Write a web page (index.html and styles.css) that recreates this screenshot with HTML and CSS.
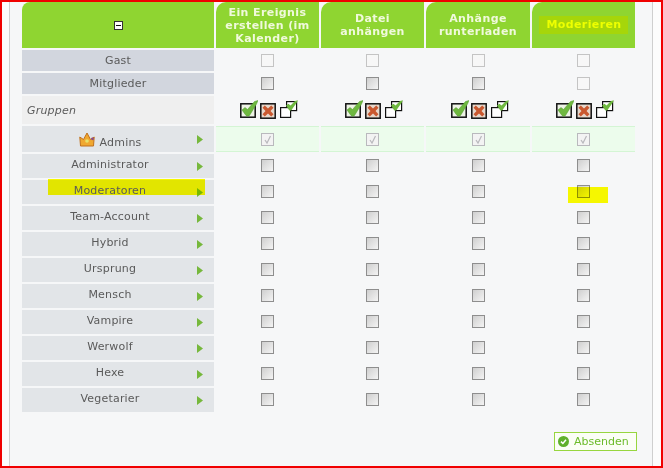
FILE: index.html
```html
<!DOCTYPE html>
<html lang="de">
<head>
<meta charset="utf-8">
<title>Berechtigungen</title>
<link rel="stylesheet" href="styles.css">
</head>
<body>
<svg class="defs" width="0" height="0" aria-hidden="true">
  <symbol id="i-check" viewBox="0 0 18 18">
    <rect x="0.8" y="3.8" width="14.4" height="13.4" fill="#eef3e6" stroke="#111" stroke-width="1.5"/>
    <path d="M2 10 L5 7.5 L7.5 9.5 L14.5 1.5 L18 .5 L16.5 4 L9.5 15.5 Q7.5 17 6 15.5 Z" fill="#6fb840" stroke="#4f9a2c" stroke-width=".5"/>
  </symbol>
  <symbol id="i-cross" viewBox="0 0 16 16">
    <rect x="0.8" y="0.8" width="14.4" height="14.4" fill="#e6d8cc" stroke="#111" stroke-width="1.5"/>
    <path d="M2.5 4.8 L4.8 2.5 L8 5.5 L11.2 2.5 L13.5 4.8 L10.5 8 L13.5 11.2 L11.2 13.5 L8 10.5 L4.8 13.5 L2.5 11.2 L5.5 8 Z" fill="#c9582f"/>
  </symbol>
  <symbol id="i-copy" viewBox="0 0 18 18">
    <rect x="6.6" y="1.6" width="10" height="9" fill="#fff" stroke="#111" stroke-width="1.2"/>
    <rect x="0.6" y="7.6" width="10" height="9.8" fill="#fff" stroke="#111" stroke-width="1.2"/>
    <path d="M6 5.5 L8.5 3.8 L10.5 5.5 L15 1 L18 .3 L16.5 3 L11.5 10 Q10 11 9 10 Z" fill="#6fb840"/>
  </symbol>
  <symbol id="i-arrow" viewBox="0 0 6 9">
    <path d="M0 0 L6 4.5 L0 9 Z" fill="#76b83c"/>
  </symbol>
</svg>
<main class="frame">
  <div class="page">
    <div class="grid">
      <div class="head head-toggle"><span class="toggle"></span></div>
      <div class="head">Ein Ereignis erstellen (im Kalender)</div>
      <div class="head">Datei anhängen</div>
      <div class="head">Anhänge runterladen</div>
      <div class="head"><span class="mark-head">Moderieren</span></div>

      <div class="label label-base">Gast</div>
      <div class="cell"><span class="box"></span></div>
      <div class="cell"><span class="box"></span></div>
      <div class="cell"><span class="box"></span></div>
      <div class="cell"><span class="box"></span></div>

      <div class="label label-base">Mitglieder</div>
      <div class="cell"><span class="box box-on"></span></div>
      <div class="cell"><span class="box box-on"></span></div>
      <div class="cell"><span class="box box-on"></span></div>
      <div class="cell"><span class="box"></span></div>

      <div class="label label-section">Gruppen</div>
      <div class="cell cell-tools"><svg class="ti"><use href="#i-check"/></svg><svg class="ti ti-x"><use href="#i-cross"/></svg><svg class="ti"><use href="#i-copy"/></svg></div>
      <div class="cell cell-tools"><svg class="ti"><use href="#i-check"/></svg><svg class="ti ti-x"><use href="#i-cross"/></svg><svg class="ti"><use href="#i-copy"/></svg></div>
      <div class="cell cell-tools"><svg class="ti"><use href="#i-check"/></svg><svg class="ti ti-x"><use href="#i-cross"/></svg><svg class="ti"><use href="#i-copy"/></svg></div>
      <div class="cell cell-tools"><svg class="ti"><use href="#i-check"/></svg><svg class="ti ti-x"><use href="#i-cross"/></svg><svg class="ti"><use href="#i-copy"/></svg></div>

      <div class="label label-group">
        <span class="name name-admin"><svg class="crown" viewBox="0 0 16 15"><path d="M.8 5 L4.5 7.5 L8 1 L11.5 7.5 L15.2 5 L14.5 14 L1.5 14 Z" fill="#f0a830" stroke="#c0701c" stroke-width="1"/><circle cx="8" cy="9" r="1.8" fill="#e7e26a"/><circle cx="13.5" cy="6.8" r="1.4" fill="#8a4a8a"/></svg>Admins</span>
        <svg class="arrow"><use href="#i-arrow"/></svg>
      </div>
      <div class="cell cell-green"><span class="box box-check"><svg viewBox="0 0 11 11"><path d="M3 6 L5 9 L8.5 2" fill="none" stroke="#b8b8bc" stroke-width="1.2"/></svg></span></div>
      <div class="cell cell-green"><span class="box box-check"><svg viewBox="0 0 11 11"><path d="M3 6 L5 9 L8.5 2" fill="none" stroke="#b8b8bc" stroke-width="1.2"/></svg></span></div>
      <div class="cell cell-green"><span class="box box-check"><svg viewBox="0 0 11 11"><path d="M3 6 L5 9 L8.5 2" fill="none" stroke="#b8b8bc" stroke-width="1.2"/></svg></span></div>
      <div class="cell cell-green"><span class="box box-check"><svg viewBox="0 0 11 11"><path d="M3 6 L5 9 L8.5 2" fill="none" stroke="#b8b8bc" stroke-width="1.2"/></svg></span></div>

      <div class="label label-group"><span class="name">Administrator</span><svg class="arrow"><use href="#i-arrow"/></svg></div>
      <div class="cell"><span class="box box-on"></span></div>
      <div class="cell"><span class="box box-on"></span></div>
      <div class="cell"><span class="box box-on"></span></div>
      <div class="cell"><span class="box box-on"></span></div>

      <div class="label label-group"><span class="mark mark-row"></span><span class="name">Moderatoren</span><svg class="arrow"><use href="#i-arrow"/></svg></div>
      <div class="cell"><span class="box box-on"></span></div>
      <div class="cell"><span class="box box-on"></span></div>
      <div class="cell"><span class="box box-on"></span></div>
      <div class="cell"><span class="box box-on"></span><span class="mark mark-box"></span></div>

      <div class="label label-group"><span class="name">Team-Account</span><svg class="arrow"><use href="#i-arrow"/></svg></div>
      <div class="cell"><span class="box box-on"></span></div>
      <div class="cell"><span class="box box-on"></span></div>
      <div class="cell"><span class="box box-on"></span></div>
      <div class="cell"><span class="box box-on"></span></div>

      <div class="label label-group"><span class="name">Hybrid</span><svg class="arrow"><use href="#i-arrow"/></svg></div>
      <div class="cell"><span class="box box-on"></span></div>
      <div class="cell"><span class="box box-on"></span></div>
      <div class="cell"><span class="box box-on"></span></div>
      <div class="cell"><span class="box box-on"></span></div>

      <div class="label label-group"><span class="name">Ursprung</span><svg class="arrow"><use href="#i-arrow"/></svg></div>
      <div class="cell"><span class="box box-on"></span></div>
      <div class="cell"><span class="box box-on"></span></div>
      <div class="cell"><span class="box box-on"></span></div>
      <div class="cell"><span class="box box-on"></span></div>

      <div class="label label-group"><span class="name">Mensch</span><svg class="arrow"><use href="#i-arrow"/></svg></div>
      <div class="cell"><span class="box box-on"></span></div>
      <div class="cell"><span class="box box-on"></span></div>
      <div class="cell"><span class="box box-on"></span></div>
      <div class="cell"><span class="box box-on"></span></div>

      <div class="label label-group"><span class="name">Vampire</span><svg class="arrow"><use href="#i-arrow"/></svg></div>
      <div class="cell"><span class="box box-on"></span></div>
      <div class="cell"><span class="box box-on"></span></div>
      <div class="cell"><span class="box box-on"></span></div>
      <div class="cell"><span class="box box-on"></span></div>

      <div class="label label-group"><span class="name">Werwolf</span><svg class="arrow"><use href="#i-arrow"/></svg></div>
      <div class="cell"><span class="box box-on"></span></div>
      <div class="cell"><span class="box box-on"></span></div>
      <div class="cell"><span class="box box-on"></span></div>
      <div class="cell"><span class="box box-on"></span></div>

      <div class="label label-group"><span class="name">Hexe</span><svg class="arrow"><use href="#i-arrow"/></svg></div>
      <div class="cell"><span class="box box-on"></span></div>
      <div class="cell"><span class="box box-on"></span></div>
      <div class="cell"><span class="box box-on"></span></div>
      <div class="cell"><span class="box box-on"></span></div>

      <div class="label label-group"><span class="name">Vegetarier</span><svg class="arrow"><use href="#i-arrow"/></svg></div>
      <div class="cell"><span class="box box-on"></span></div>
      <div class="cell"><span class="box box-on"></span></div>
      <div class="cell"><span class="box box-on"></span></div>
      <div class="cell"><span class="box box-on"></span></div>
    </div>
    <div class="actions">
      <button class="submit" type="button"><svg class="submit-icon" viewBox="0 0 11 11"><circle cx="5.5" cy="5.5" r="5.5" fill="#5fb02c"/><path d="M3 5.6 L4.9 7.5 L8 3.8" fill="none" stroke="#fff" stroke-width="1.5"/></svg>Absenden</button>
    </div>
  </div>
</main>
</body>
</html>
```
FILE: styles.css
```css
* {
  box-sizing: border-box;
}

html,
body {
  margin: 0;
  padding: 0;
  height: 100%;
}

body {
  font-family: "DejaVu Sans", Verdana, sans-serif;
  font-size: 11px;
  color: #555;
  overflow: hidden;
}

.defs {
  position: absolute;
}

.frame {
  width: 663px;
  height: 468px;
  border: 2px solid #f00000;
  background: #fcfcfc;
  padding: 0 8px 0 7px;
}

.page {
  height: 100%;
  background: #f6f7f8;
  border-left: 1px solid #cfcfcf;
  border-right: 1px solid #cfcfcf;
  padding-left: 12px;
}

.grid {
  display: grid;
  width: 613px;
  grid-template-columns: 192px 103px 103px 104px 103px;
  grid-template-rows: 46px 21px 21px 28px 26px repeat(10, 24px);
  gap: 2px;
}

.head {
  display: flex;
  align-items: center;
  justify-content: center;
  padding: 0 6px;
  background: #8fd531;
  border-top-left-radius: 10px;
  color: #f0f9dc;
  font-weight: bold;
  font-size: 11px;
  letter-spacing: 0.4px;
  line-height: 13px;
  text-align: center;
}

.head-toggle {
  border-top-left-radius: 8px;
}

.toggle {
  position: relative;
  width: 9px;
  height: 9px;
  background: #fff;
  border: 1px solid #333;
}

.toggle::after {
  content: "";
  position: absolute;
  left: 1px;
  top: 3px;
  width: 5px;
  height: 1px;
  background: #111;
}

.mark-head {
  padding: 2px 6px 3px 7px;
  background: #a6d60a;
  color: #eeff00;
}

.label {
  position: relative;
  display: flex;
  align-items: center;
  color: #5a5a5a;
  letter-spacing: 0.2px;
}

.label-base {
  justify-content: center;
  background: #d2d6de;
}

.label-section {
  padding-left: 5px;
  background: #efefef;
  font-style: italic;
}

.label-group {
  background: #e2e5e8;
  padding-left: 1px;
  padding-right: 11px;
}

.name {
  position: relative;
  flex: 1;
  padding-bottom: 4px;
  text-align: center;
}

.name-admin {
  padding: 3px 0 0;
}

.crown {
  width: 16px;
  height: 15px;
  margin-right: 5px;
  vertical-align: -1px;
}

.arrow {
  width: 6px;
  height: 9px;
  flex: none;
}

.cell {
  position: relative;
  display: flex;
  align-items: center;
  justify-content: center;
}

.grid > .cell:nth-child(n+26) {
  padding-bottom: 1px;
}

.cell-tools {
  align-items: flex-start;
  gap: 2px;
  padding: 4px 0 0 3px;
}

.cell-green {
  background: #ecfcec;
  border-top: 1px solid #d4f5d4;
  border-bottom: 1px solid #d4f5d4;
}

.ti {
  width: 18px;
  height: 18px;
}

.ti-x {
  width: 16px;
  height: 16px;
  margin: 3px 2px 0 0;
}

.box {
  display: block;
  width: 13px;
  height: 13px;
  background: #f7f7f7;
  border: 1px solid #c4c4c4;
}

.box-on {
  background: linear-gradient(135deg, #cfcfcf, #f4f4f4);
  border-color: #8e8e8e;
}

.box-check {
  background: #f3f3f3;
  border-color: #b9b9bd;
}

.box-check svg {
  display: block;
  width: 11px;
  height: 11px;
}

.mark {
  position: absolute;
  mix-blend-mode: multiply;
  background: #ffff00;
}

.mark-row {
  left: 26px;
  top: -1px;
  width: 157px;
  height: 16px;
}

.mark-box {
  left: 36px;
  top: 7px;
  width: 40px;
  height: 16px;
}

.actions {
  display: flex;
  justify-content: flex-end;
  width: 615px;
  margin-top: 20px;
}

.submit {
  display: flex;
  align-items: center;
  gap: 5px;
  width: 83px;
  height: 19px;
  padding: 0 0 0 3px;
  background: #fbfef6;
  border: 1px solid #97d63f;
  color: #6cbb2a;
  font: 11px "DejaVu Sans", Verdana, sans-serif;
}

.submit-icon {
  width: 11px;
  height: 11px;
  flex: none;
}
```
